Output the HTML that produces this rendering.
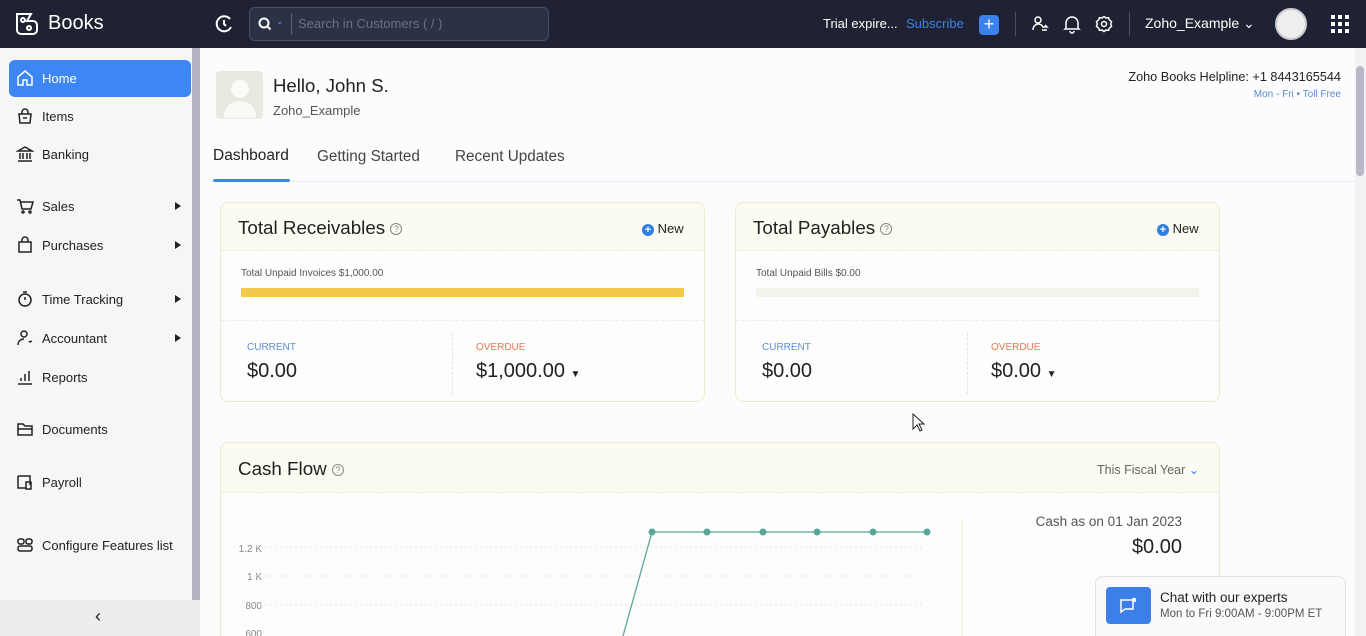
<!DOCTYPE html>
<html><head><meta charset="utf-8"><style>
*{box-sizing:border-box;margin:0;padding:0}
html,body{width:1366px;height:636px;overflow:hidden}
body{font-family:"Liberation Sans",sans-serif;background:#fcfcfe;position:relative;color:#222}
.top{position:absolute;left:0;top:0;width:1366px;height:48px;background:#1f2232;color:#fff}
.abs{position:absolute}
.side{position:absolute;left:0;top:48px;width:192px;height:588px;background:#f6f6f9}
.sb{position:absolute;left:192px;top:48px;width:8px;height:552px;background:#b3b3c2}
.collapse{position:absolute;left:0;top:600px;width:200px;height:36px;background:#ececea}
.nav{position:absolute;left:16px;font-size:13px;color:#222;display:flex;align-items:center;gap:8px}
.nav svg{width:18px;height:18px;fill:none;stroke:#222;stroke-width:1.5}
.arr{position:absolute;left:175px;width:0;height:0;border-left:6px solid #222;border-top:4px solid transparent;border-bottom:4px solid transparent}
.card{position:absolute;background:#fdfdfd;border:1px solid #eee9c8;border-radius:8px}
.ch{height:48px;border-bottom:1px dashed #ececd8;background:#fbfbf2;border-radius:8px 8px 0 0}
.q{display:inline-block;width:12px;height:12px;border:1px solid #888;border-radius:50%;font-size:9px;text-align:center;line-height:11px;color:#888;vertical-align:middle}
.lbl{font-size:10px}
</style></head><body>
<div class="top">
  <svg class="abs" style="left:14px;top:11px" width="26" height="26" viewBox="0 0 26 26" fill="none" stroke="#fff" stroke-width="2"><path d="M3 3h14l-4 7h6a4 4 0 0 1 4 4v5a4 4 0 0 1-4 4H7a4 4 0 0 1-4-4z"/><circle cx="9" cy="9" r="2"/><circle cx="15" cy="17" r="2"/></svg>
  <div class="abs" style="left:48px;top:12px;font-size:20px">Books</div>
  <svg class="abs" style="left:214px;top:14px" width="20" height="20" viewBox="0 0 20 20" fill="none" stroke="#fff" stroke-width="2"><path d="M16 5A7.5 7.5 0 1 0 17 13"/><path d="M10 6v4l2 2"/></svg>
  <div class="abs" style="left:249px;top:7px;width:300px;height:34px;border:1px solid #4a5068;border-radius:6px;background:#2c3246"></div>
  <svg class="abs" style="left:258px;top:17px" width="14" height="14" viewBox="0 0 14 14" fill="none" stroke="#fff" stroke-width="2"><circle cx="6" cy="6" r="4.5"/><path d="M9.5 9.5l3 3"/></svg>
  <div class="abs" style="left:276px;top:16px;font-size:9px;color:#5c9be8">⌄</div>
  <div class="abs" style="left:291px;top:13px;width:1px;height:22px;background:#5a6078"></div>
  <div class="abs" style="left:298px;top:16px;font-size:13px;color:#6b708a">Search in Customers ( / )</div>
  <div class="abs" style="left:823px;top:16px;font-size:13px">Trial expire...</div>
  <div class="abs" style="left:906px;top:16px;font-size:13px;color:#3b82e6">Subscribe</div>
  <div class="abs" style="left:979px;top:15px;width:20px;height:20px;background:#3b82f0;border-radius:4px;text-align:center;font-size:18px;line-height:19px">+</div>
  <div class="abs" style="left:1015px;top:12px;width:1px;height:24px;background:#4a5068"></div>
  <svg class="abs" style="left:1031px;top:15px" width="18" height="18" viewBox="0 0 18 18" fill="none" stroke="#fff" stroke-width="1.5"><circle cx="7" cy="5" r="3"/><path d="M2 15c0-4 3-6 5-6s4 1 5 3"/><path d="M11 12h5l-2-2M16 15h-5"/></svg>
  <svg class="abs" style="left:1063px;top:14px" width="18" height="20" viewBox="0 0 18 20" fill="none" stroke="#fff" stroke-width="1.5"><path d="M3 14V9a6 6 0 0 1 12 0v5l1 1H2z"/><path d="M7 17a2 2 0 0 0 4 0"/></svg>
  <svg class="abs" style="left:1095px;top:15px" width="18" height="18" viewBox="0 0 18 18" fill="none" stroke="#fff" stroke-width="1.5"><circle cx="9" cy="9" r="2.5"/><path d="M9 1.5l2 1.5 2.5-.3 1 2.3 2 1.5-.8 2.5.8 2.5-2 1.5-1 2.3-2.5-.3-2 1.5-2-1.5-2.5.3-1-2.3-2-1.5.8-2.5-.8-2.5 2-1.5 1-2.3 2.5.3z"/></svg>
  <div class="abs" style="left:1129px;top:12px;width:1px;height:24px;background:#4a5068"></div>
  <div class="abs" style="left:1145px;top:15px;font-size:14px">Zoho_Example ⌄</div>
  <div class="abs" style="left:1275px;top:8px;width:32px;height:32px;border-radius:50%;background:#eee;border:2px solid #ccc"></div>
  <svg class="abs" style="left:1331px;top:15px" width="18" height="18" viewBox="0 0 18 18" fill="#fff"><rect x="0" y="0" width="4" height="4"/><rect x="7" y="0" width="4" height="4"/><rect x="14" y="0" width="4" height="4"/><rect x="0" y="7" width="4" height="4"/><rect x="7" y="7" width="4" height="4"/><rect x="14" y="7" width="4" height="4"/><rect x="0" y="14" width="4" height="4"/><rect x="7" y="14" width="4" height="4"/><rect x="14" y="14" width="4" height="4"/></svg>
</div>

<div class="side"></div>
<div class="sb"></div>
<div class="collapse"><div class="abs" style="left:95px;top:6px;font-size:18px;color:#222">‹</div></div>
<div class="abs" style="left:9px;top:60px;width:182px;height:37px;background:#3d87f5;border-radius:6px"></div>
<div class="nav" style="top:69px;color:#fff"><svg viewBox="0 0 18 18" style="stroke:#fff"><path d="M2 8l7-6 7 6v8H11v-5H7v5H2z"/></svg>Home</div>
<div class="nav" style="top:107px"><svg viewBox="0 0 18 18"><path d="M3 7h12l-1 9H4z"/><path d="M6 7V5a3 3 0 0 1 6 0v2M7 11h4"/></svg>Items</div>
<div class="nav" style="top:145px"><svg viewBox="0 0 18 18"><path d="M2 6l7-4 7 4zM4 8v6M7 8v6M11 8v6M14 8v6M2 16h14"/></svg>Banking</div>
<div class="nav" style="top:197px"><svg viewBox="0 0 18 18"><path d="M1 3h3l2 9h9l2-7H5"/><circle cx="7" cy="15" r="1"/><circle cx="14" cy="15" r="1"/></svg>Sales</div><div class="arr" style="top:202px"></div>
<div class="nav" style="top:236px"><svg viewBox="0 0 18 18"><path d="M3 6h12v10H3z"/><path d="M6 6V4a3 3 0 0 1 6 0v2"/></svg>Purchases</div><div class="arr" style="top:241px"></div>
<div class="nav" style="top:290px"><svg viewBox="0 0 18 18"><circle cx="9" cy="10" r="6"/><path d="M9 7v3M7 2h4"/></svg>Time Tracking</div><div class="arr" style="top:295px"></div>
<div class="nav" style="top:329px"><svg viewBox="0 0 18 18"><circle cx="8" cy="5" r="3"/><path d="M2 16c0-4 3-6 6-6M13 12l1 1 2-1"/></svg>Accountant</div><div class="arr" style="top:334px"></div>
<div class="nav" style="top:368px"><svg viewBox="0 0 18 18"><path d="M2 16h14M5 13v-3M9 13V6M13 13V3"/></svg>Reports</div>
<div class="nav" style="top:420px"><svg viewBox="0 0 18 18"><path d="M2 4h5l2 2h7v9H2z M2 9h14"/></svg>Documents</div>
<div class="nav" style="top:473px"><svg viewBox="0 0 18 18"><path d="M2 3h12v9M2 3v12h8"/><rect x="10" y="9" width="5" height="7"/></svg>Payroll</div>
<div class="nav" style="top:536px"><svg viewBox="0 0 18 18"><rect x="2" y="3" width="6" height="5" rx="2"/><rect x="10" y="3" width="6" height="5" rx="2"/><rect x="2" y="10" width="14" height="5" rx="2"/></svg>Configure Features list</div>

<div class="abs" style="left:1355px;top:48px;width:11px;height:588px;background:#f2f2f2"></div>
<div class="abs" style="left:1356px;top:66px;width:8px;height:110px;background:#b8b8c8;border-radius:4px"></div>

<div class="abs" style="left:216px;top:71px;width:47px;height:48px;background:#e9e9e2;border-radius:4px"></div>
<svg class="abs" style="left:222px;top:76px" width="36" height="42" viewBox="0 0 36 42" fill="#fafaf5"><circle cx="18" cy="13" r="9"/><path d="M2 42c0-12 7-17 16-17s16 5 16 17z"/></svg>
<div class="abs" style="left:273px;top:75px;font-size:18.6px">Hello, John S.</div>
<div class="abs" style="left:273px;top:103px;font-size:13px;color:#555">Zoho_Example</div>
<div class="abs" style="left:1000px;top:70px;width:341px;text-align:right;font-size:12.7px;color:#222">Zoho Books Helpline: +1 8443165544</div>
<div class="abs" style="left:1000px;top:89px;width:341px;text-align:right;font-size:10px;color:#5a8bc8">Mon - Fri • Toll Free</div>
<div class="abs" style="left:213px;top:147px;font-size:15.5px;color:#222">Dashboard</div>
<div class="abs" style="left:317px;top:148px;font-size:15.3px;color:#444">Getting Started</div>
<div class="abs" style="left:455px;top:148px;font-size:15.3px;color:#444">Recent Updates</div>
<div class="abs" style="left:213px;top:179px;width:77px;height:3px;background:#3d87f5;border-radius:2px"></div>
<div class="abs" style="left:290px;top:181px;width:1065px;height:1px;background:#ececf0"></div>

<!-- receivables -->
<div class="card" style="left:220px;top:202px;width:485px;height:200px">
  <div class="ch"><div class="abs" style="left:17px;top:14px;font-size:18.8px">Total Receivables <span class="q">?</span></div>
  <div class="abs" style="left:421px;top:18px;font-size:13px"><span style="display:inline-block;width:12px;height:12px;border-radius:50%;background:#2d7fe0;color:#fff;font-size:11px;line-height:12px;text-align:center;font-weight:bold">+</span> New</div></div>
  <div class="abs" style="left:20px;top:65px;font-size:10px;color:#555">Total Unpaid Invoices $1,000.00</div>
  <div class="abs" style="left:20px;top:85px;width:443px;height:9px;background:#f2c94c"></div>
  <div class="abs" style="left:0;top:117px;width:483px;border-top:1px dashed #ececec"></div>
  <div class="abs" style="left:231px;top:130px;height:61px;border-left:1px dashed #e4e4e4"></div>
  <div class="abs lbl" style="left:26px;top:139px;color:#5a8fd8">CURRENT</div>
  <div class="abs" style="left:26px;top:157px;font-size:20px">$0.00</div>
  <div class="abs lbl" style="left:255px;top:139px;color:#e07a52">OVERDUE</div>
  <div class="abs" style="left:255px;top:157px;font-size:20px">$1,000.00 <span style="font-size:10px">▼</span></div>
</div>
<!-- payables -->
<div class="card" style="left:735px;top:202px;width:485px;height:200px">
  <div class="ch"><div class="abs" style="left:17px;top:14px;font-size:18.8px">Total Payables <span class="q">?</span></div>
  <div class="abs" style="left:421px;top:18px;font-size:13px"><span style="display:inline-block;width:12px;height:12px;border-radius:50%;background:#2d7fe0;color:#fff;font-size:11px;line-height:12px;text-align:center;font-weight:bold">+</span> New</div></div>
  <div class="abs" style="left:20px;top:65px;font-size:10px;color:#555">Total Unpaid Bills $0.00</div>
  <div class="abs" style="left:20px;top:85px;width:443px;height:9px;background:#f3f3ea"></div>
  <div class="abs" style="left:0;top:117px;width:483px;border-top:1px dashed #ececec"></div>
  <div class="abs" style="left:231px;top:130px;height:61px;border-left:1px dashed #e4e4e4"></div>
  <div class="abs lbl" style="left:26px;top:139px;color:#5a8fd8">CURRENT</div>
  <div class="abs" style="left:26px;top:157px;font-size:20px">$0.00</div>
  <div class="abs lbl" style="left:255px;top:139px;color:#e07a52">OVERDUE</div>
  <div class="abs" style="left:255px;top:157px;font-size:20px">$0.00 <span style="font-size:10px">▼</span></div>
</div>
<!-- cash flow -->
<div class="card" style="left:220px;top:442px;width:1000px;height:220px">
  <div class="ch" style="height:50px"><div class="abs" style="left:17px;top:15px;font-size:18.8px">Cash Flow <span class="q">?</span></div>
  <div class="abs" style="left:876px;top:19px;font-size:12.5px;color:#666">This Fiscal Year <span style="color:#3d87f5">⌄</span></div></div>
</div>
<svg class="abs" style="left:220px;top:500px" width="760" height="136">
  <g font-family="Liberation Sans" font-size="10" fill="#888" text-anchor="end">
  <text x="42" y="52">1.2 K</text><text x="42" y="80">1 K</text><text x="42" y="109">800</text><text x="42" y="137">600</text></g>
  <g stroke="#e8e8d8" stroke-dasharray="2 3"><path d="M35 47H705M35 76H705M35 105H705"/></g>
  <path d="M742 20V136" stroke="#eee9c8"/>
  <path d="M403 136L432 32H707" stroke="#5aa79a" stroke-width="1.3" fill="none"/>
  <g fill="#5aa79a"><circle cx="432" cy="32" r="3.5"/><circle cx="487" cy="32" r="3.5"/><circle cx="543" cy="32" r="3.5"/><circle cx="597" cy="32" r="3.5"/><circle cx="653" cy="32" r="3.5"/><circle cx="707" cy="32" r="3.5"/></g>
</svg>
<div class="abs" style="left:962px;top:514px;width:220px;text-align:right;font-size:13.5px;color:#555">Cash as on 01 Jan 2023</div>
<div class="abs" style="left:982px;top:536px;width:200px;text-align:right;font-size:20px">$0.00</div>

<div class="abs" style="left:1095px;top:576px;width:251px;height:70px;background:#fafafa;border:1px solid #e0e0e0;border-radius:8px"></div>
<div class="abs" style="left:1106px;top:587px;width:45px;height:37px;background:#3d7fe8;border-radius:4px"></div>
<svg class="abs" style="left:1119px;top:597px" width="20" height="18" viewBox="0 0 20 18" fill="none" stroke="#fff" stroke-width="1.5"><path d="M2 3h12v9H6l-4 3z"/><circle cx="15" cy="3" r="1.5" fill="#fff"/></svg>
<div class="abs" style="left:1160px;top:590px;font-size:13.5px;color:#222">Chat with our experts</div>
<div class="abs" style="left:1160px;top:608px;font-size:11.5px;color:#555">Mon to Fri 9:00AM - 9:00PM ET</div>
<svg class="abs" style="left:912px;top:413px" width="14" height="20" viewBox="0 0 14 20"><path d="M1 1v15l4-4 3 6 2-1-3-6h5z" fill="#fff" stroke="#222"/></svg>
</body></html>
